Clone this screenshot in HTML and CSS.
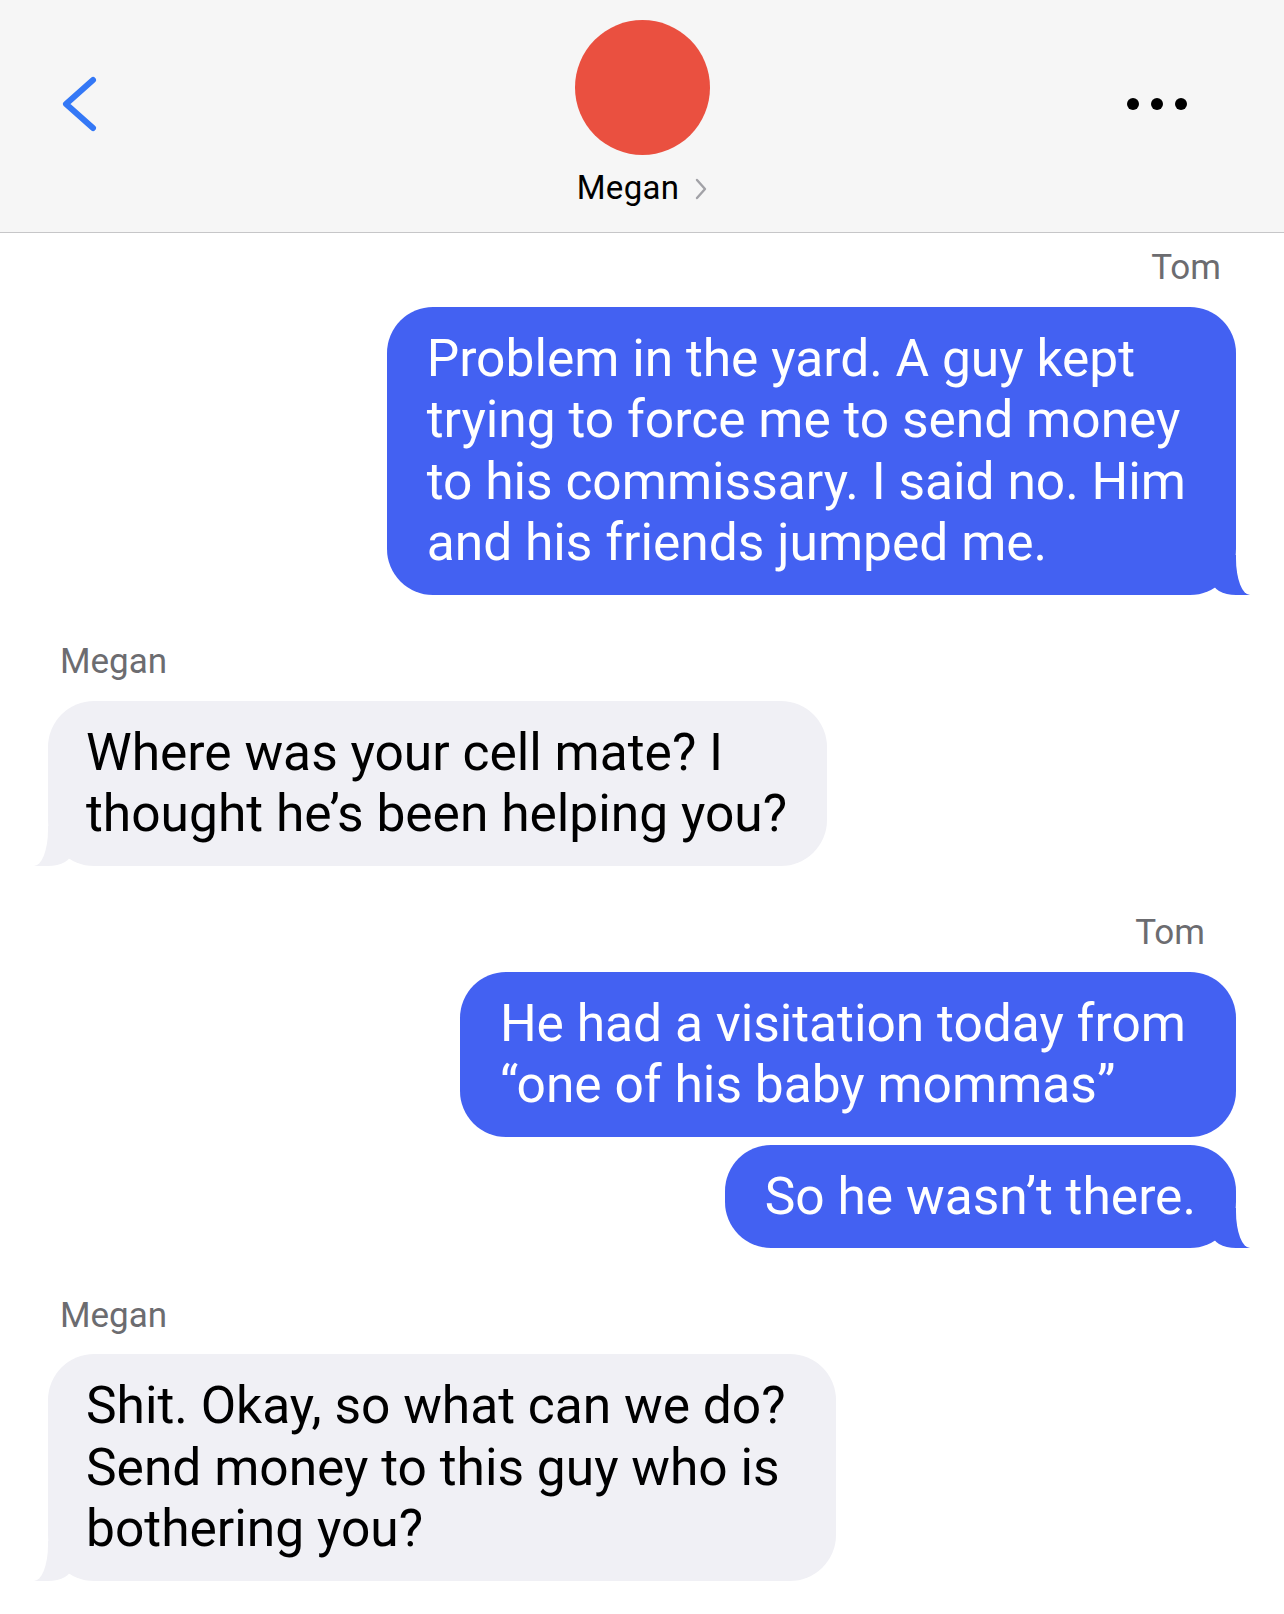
FILE: index.html
```html
<!DOCTYPE html>
<html lang="en">
<head>
<meta charset="utf-8">
<title>Megan</title>
<link rel="stylesheet" href="styles.css">
</head>
<body>
<header class="nav">
  <div class="nav-left">
    <svg class="back" width="44" height="60" viewBox="0 0 44 60" aria-hidden="true">
      <path d="M35 6 L8 30 L35 54" fill="none" stroke="#3478f6" stroke-width="6" stroke-linecap="round" stroke-linejoin="round"/>
    </svg>
  </div>
  <div class="nav-center">
    <div class="avatar"></div>
    <div class="contact">
      <span class="contact-name">Megan</span>
      <svg class="contact-chev" width="12" height="22" viewBox="0 0 12 22" aria-hidden="true">
        <path d="M2 2 L10 11 L2 20" fill="none" stroke="#a2a2a7" stroke-width="2.4" stroke-linecap="round" stroke-linejoin="round"/>
      </svg>
    </div>
  </div>
  <div class="nav-right">
    <span class="dot"></span><span class="dot"></span><span class="dot"></span>
  </div>
</header>

<main class="thread">
  <section class="group sent">
    <div class="sender">Tom</div>
    <div class="bubble tail loose">Problem in the yard. A guy kept<br>trying to force me to send money<br>to his commissary. I said no. Him<br>and his friends jumped me.</div>
  </section>

  <section class="group received">
    <div class="sender">Megan</div>
    <div class="bubble tail">Where was your cell mate? I<br>thought he’s been helping you?</div>
  </section>

  <section class="group sent">
    <div class="sender sender-inset">Tom</div>
    <div class="bubble loose">He had a visitation today from<br>“one of his baby mommas”</div>
    <div class="bubble tail">So he wasn’t there.</div>
  </section>

  <section class="group received">
    <div class="sender">Megan</div>
    <div class="bubble tail loose">Shit. Okay, so what can we do?<br>Send money to this guy who is<br>bothering you?</div>
  </section>
</main>
</body>
</html>
```

FILE: styles.css
```css
* { box-sizing: border-box; }

html, body {
  margin: 0;
  padding: 0;
  background: #ffffff;
}

body {
  font-family: Roboto, "Liberation Sans", Arial, sans-serif;
  color: #000;
  width: 1284px;
  min-height: 1614px;
  overflow: hidden;
}

/* ---------- header ---------- */
.nav {
  height: 233px;
  background: #f6f6f6;
  border-bottom: 1px solid #c6c6c8;
  display: grid;
  grid-template-columns: 1fr auto 1fr;
  align-items: start;
}

.nav-left {
  padding-left: 58px;
  padding-top: 74px;
}

.back { display: block; }

.nav-center {
  display: flex;
  flex-direction: column;
  align-items: center;
  padding-top: 20px;
}

.avatar {
  width: 135px;
  height: 135px;
  border-radius: 50%;
  background: #ea5040;
}

.contact {
  margin-top: 14px;
  display: flex;
  align-items: center;
  gap: 16px;
  height: 38px;
}

.contact-name {
  font-size: 33px;
  line-height: 38px;
  letter-spacing: 0.3px;
}

.contact-chev { display: block; margin-top: 2px; }

.nav-right {
  justify-self: end;
  padding-right: 97px;
  padding-top: 98px;
  display: flex;
  gap: 12px;
}

.dot {
  width: 12px;
  height: 12px;
  border-radius: 50%;
  background: #000;
}

/* ---------- thread ---------- */
.thread {
  padding: 15px 48px 0;
}

.group {
  display: flex;
  flex-direction: column;
  gap: 8px;
}

.group + .group { margin-top: 47.5px; }

.sent { align-items: flex-end; }
.received { align-items: flex-start; }

.sender {
  font-size: 35px;
  line-height: 40px;
  color: #6c6c70;
  margin-bottom: 10.5px;
}

.sent .sender { margin-right: 15px; }
.sent .sender-inset { margin-right: 31px; }
.received .sender { margin-left: 12px; }

.bubble {
  position: relative;
  isolation: isolate;
  font-size: 51.5px;
  line-height: 61.5px;
  padding: 21px 40px;
  border-radius: 46px;
  white-space: nowrap;
}

.bubble.loose { padding-right: 50px; }

.sent .bubble {
  background: #4361f2;
  color: #fff;
}

.received .bubble {
  background: #f0f0f5;
  color: #000;
  padding-left: 38px;
}

/* tails */
.bubble.tail::before,
.bubble.tail::after {
  content: "";
  position: absolute;
  bottom: 0;
  z-index: -1;
}

.sent .bubble.tail::before {
  right: -14px;
  width: 38px;
  height: 40px;
  background: #4361f2;
  border-bottom-left-radius: 24px 14px;
}

.sent .bubble.tail::after {
  left: 100%;
  width: 30px;
  height: 44px;
  background: #fff;
  border-bottom-left-radius: 14px 36px;
}

.received .bubble.tail::before {
  left: -14px;
  width: 38px;
  height: 40px;
  background: #f0f0f5;
  border-bottom-right-radius: 24px 14px;
}

.received .bubble.tail::after {
  right: 100%;
  width: 30px;
  height: 44px;
  background: #fff;
  border-bottom-right-radius: 14px 36px;
}
```
